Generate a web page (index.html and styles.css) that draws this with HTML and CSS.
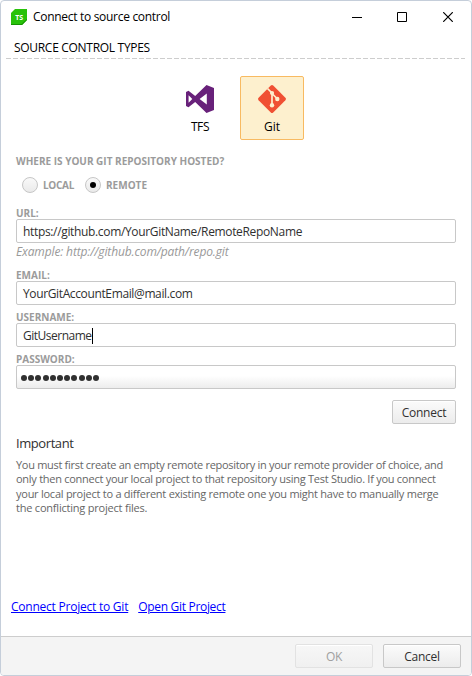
FILE: index.html
```html
<!DOCTYPE html>
<html lang="en">
<head>
<meta charset="utf-8">
<title>Connect to source control</title>
<link rel="stylesheet" href="styles.css">
</head>
<body>
<main class="window">
  <header class="titlebar">
    <svg class="app-icon" width="16" height="16" viewBox="0 0 16 16"><path d="M4 0H16V11L11 16H0V4Z" fill="#28c20a"/><path d="M0 15V16H11L16 11V10L10.500 15Z" fill="#149300"/><text x="8.200" y="10.500" text-anchor="middle" class="logo-text">TS</text></svg>
    <h1 class="title"><span>Connect to source control</span></h1>
    <div class="controls">
      <svg width="10" height="10" viewBox="0 0 10 10"><path d="M0 5.500H10" stroke="#000"/></svg>
      <svg width="10" height="10" viewBox="0 0 10 10"><path d="M.5 .5H9.500V9.500H.5Z" fill="none" stroke="#000"/></svg>
      <svg class="close" width="10" height="10" viewBox="0 0 10 10"><path d="M.2 .2L9.800 9.800M9.800 .2L.2 9.800" stroke="#000" stroke-width="1.200"/></svg>
    </div>
  </header>
  <h2 class="section-title"><span>SOURCE CONTROL TYPES</span></h2>
  <svg class="divider" width="459" height="1"><path d="M0 .5H459" stroke="#cdcdcd" stroke-dasharray="5 2"/></svg>
  <div class="types">
    <div class="type">
      <svg width="28" height="28" viewBox="0 0 28 28"><path fill="#68217a" fill-rule="evenodd" d="M20.500 0L28 3V25L20.500 28L9.200 17L2.500 22.200L0 21V7L2.500 5.800L9.200 11ZM20.800 8.500L13.600 14L20.800 19.500ZM2.600 10.200V17.800L6.300 14Z"/></svg>
      <span class="tfs">TFS</span>
    </div>
    <div class="type selected">
      <svg width="28" height="28" viewBox="0 0 28 28"><path fill="#f05033" d="M12.800 .6Q14 -.5 15.200 .6L27.400 12.800Q28.500 14 27.400 15.200L15.200 27.400Q14 28.500 12.800 27.400L.6 15.200Q-.5 14 .6 12.800Z"/><path d="M9.500 3.500L14 8V20.500M14 8.500L19.500 14" fill="none" stroke="#fdf0ce" stroke-width="1.700"/><circle cx="14" cy="8" r="2.100" fill="#fdf0ce"/><circle cx="14" cy="20.300" r="2.200" fill="#fdf0ce"/><circle cx="19.300" cy="14" r="2.200" fill="#fdf0ce"/></svg>
      <span class="git">Git</span>
    </div>
  </div>
  <form class="form">
    <div class="label question"><span>WHERE IS YOUR GIT REPOSITORY HOSTED?</span></div>
    <div class="radios">
      <div class="option"><i class="radio"></i><span class="label local">LOCAL</span></div>
      <div class="option"><i class="radio checked"></i><span class="label remote">REMOTE</span></div>
    </div>
    <div class="label field-label l-url"><span>URL:</span></div>
    <div class="field"><span class="v-url">https://github.com/YourGitName/RemoteRepoName</span></div>
    <div class="hint"><span>Example: http://github.com/path/repo.git</span></div>
    <div class="label field-label l-email"><span>EMAIL:</span></div>
    <div class="field"><span class="v-email">YourGitAccountEmail@mail.com</span></div>
    <div class="label field-label l-user"><span>USERNAME:</span></div>
    <div class="field"><span class="v-user">GitUsername</span><i class="caret"></i></div>
    <div class="label field-label l-pass"><span>PASSWORD:</span></div>
    <div class="field password"><i></i><i></i><i></i><i></i><i></i><i></i><i></i><i></i><i></i><i></i><i></i></div>
    <div class="actions"><div class="button connect"><span>Connect</span></div></div>
  </form>
  <section class="note">
    <h3><span>Important</span></h3>
    <p><span class="p1">You must first create an empty remote repository in your remote provider of choice, and</span><br><span class="p2">only then connect your local project to that repository using Test Studio. If you connect</span><br><span class="p3">your local project to a different existing remote one you might have to manually merge</span><br><span class="p4">the conflicting project files.</span></p>
  </section>
  <nav class="links"><a class="a1">Connect Project to Git</a><a class="a2">Open Git Project</a></nav>
  <footer class="footer">
    <div class="button disabled"><span>OK</span></div>
    <div class="button cancel"><span>Cancel</span></div>
  </footer>
</main>
</body>
</html>
```
FILE: styles.css
```css
* { box-sizing: border-box; }
body { margin: 0; background: #fff; font-family: "Open Sans", "Noto Sans", sans-serif; font-size: 12px; color: #000; }
h1, h2, h3, p { margin: 0; font-weight: 400; }
svg { display: block; flex: none; }
span, a { white-space: nowrap; }
.window { width: 472px; height: 676px; border: 1px solid #c5ceda; border-radius: 4px; overflow: hidden; display: flex; flex-direction: column; }
.titlebar { height: 31px; display: flex; align-items: center; padding: 0 18px 0 10px; }
.logo-text { font: 700 7px "Open Sans", sans-serif; fill: #fff; }
.title { margin-left: 6px; font-size: 12px; line-height: 16px; letter-spacing: -.3px; }
.controls { margin-left: auto; display: flex; gap: 35px; }
.close { margin-left: 1px; }
.section-title { padding-left: 13px; height: 26px; font-size: 12px; line-height: 31px; letter-spacing: -.3px; }
.divider { margin-left: 5px; }
.types { display: flex; gap: 8px; padding: 17px 0 0 167px; }
.type { width: 64px; height: 64px; border: 1px solid transparent; border-radius: 2px; display: flex; flex-direction: column; align-items: center; padding-top: 8px; line-height: 16px; gap: 6px; }
.tfs { letter-spacing: -.4px; }
.selected { background: #fdf0ce; border-color: #f8ba61; }
.form { padding: 0 15px; }
.label { font-size: 10px; font-weight: 700; line-height: 12px; color: #9b9b9b; }
.question { margin-top: 15px; }
.radios { display: flex; gap: 12px; height: 16px; margin: 10px 0 0 6px; }
.option { display: flex; align-items: center; gap: 5px; }
.local { width: 30px; letter-spacing: -.3px; }
.radio { width: 16px; height: 16px; border: 1px solid #c6c6c6; border-radius: 50%; background: linear-gradient(#f9f9f9, #eaeaea); display: flex; align-items: center; justify-content: center; }
.checked::after { content: ""; width: 6px; height: 6px; border-radius: 50%; background: #000; }
.field-label { height: 12px; }
.l-url { margin-top: 14px; }
.l-email { margin-top: 7px; }
.l-user, .l-pass { margin-top: 6px; }
.field { height: 24px; border: 1px solid #c8c8c8; border-radius: 2px; display: flex; align-items: center; padding: 2px 0 0 6px; color: #303030; line-height: 16px; }
.v-url { letter-spacing: -.34px; }
.v-email { letter-spacing: -.37px; }
.v-user { letter-spacing: -.5px; }
.caret { width: 1px; height: 16px; background: #000; }
.hint { margin-top: 1px; line-height: 16px; height: 18px; font-style: italic; color: #999; letter-spacing: -.13px; }
.password { padding-left: 4px; gap: 1.200px; background: linear-gradient(#fff 45%, #ececec); }
.password i { width: 6px; height: 6px; border-radius: 50%; background: #303030; }
.actions { display: flex; justify-content: flex-end; margin-top: 11px; }
.button { height: 24px; border: 1px solid #c8c8c8; border-radius: 2px; background: linear-gradient(#fbfbfb, #ececec); color: #303030; display: flex; align-items: center; justify-content: center; padding-top: 2px; line-height: 16px; letter-spacing: -.25px; box-shadow: inset 0 1px #fff; }
.connect { width: 64px; }
.note { padding: 10px 15px 0; color: #666; }
.note h3 { font-size: 13px; line-height: 18px; color: #303030; letter-spacing: -.42px; }
.note p { font-size: 11px; line-height: 14.400px; margin-top: 6px; }
.p1 { letter-spacing: -.3px; }
.p2 { letter-spacing: -.27px; }
.p3 { letter-spacing: -.25px; }
.p4 { letter-spacing: -.21px; }
.links { display: flex; gap: 10px; margin-top: auto; padding: 0 10px; height: 37px; line-height: 16px; color: #00f; }
.links a { text-decoration: underline; height: 16px; }
.a1 { letter-spacing: -.23px; }
.a2 { letter-spacing: -.31px; }
.footer { height: 39px; flex: none; border-top: 1px solid #cdcdcd; background: #f4f4f4; display: flex; justify-content: flex-end; gap: 10px; padding: 7px 10px 0; }
.footer .button { width: 78px; }
.disabled { color: #a0a0a0; border-color: #e2e2e2; background: linear-gradient(#f7f7f7, #f0f0f0); }
```
